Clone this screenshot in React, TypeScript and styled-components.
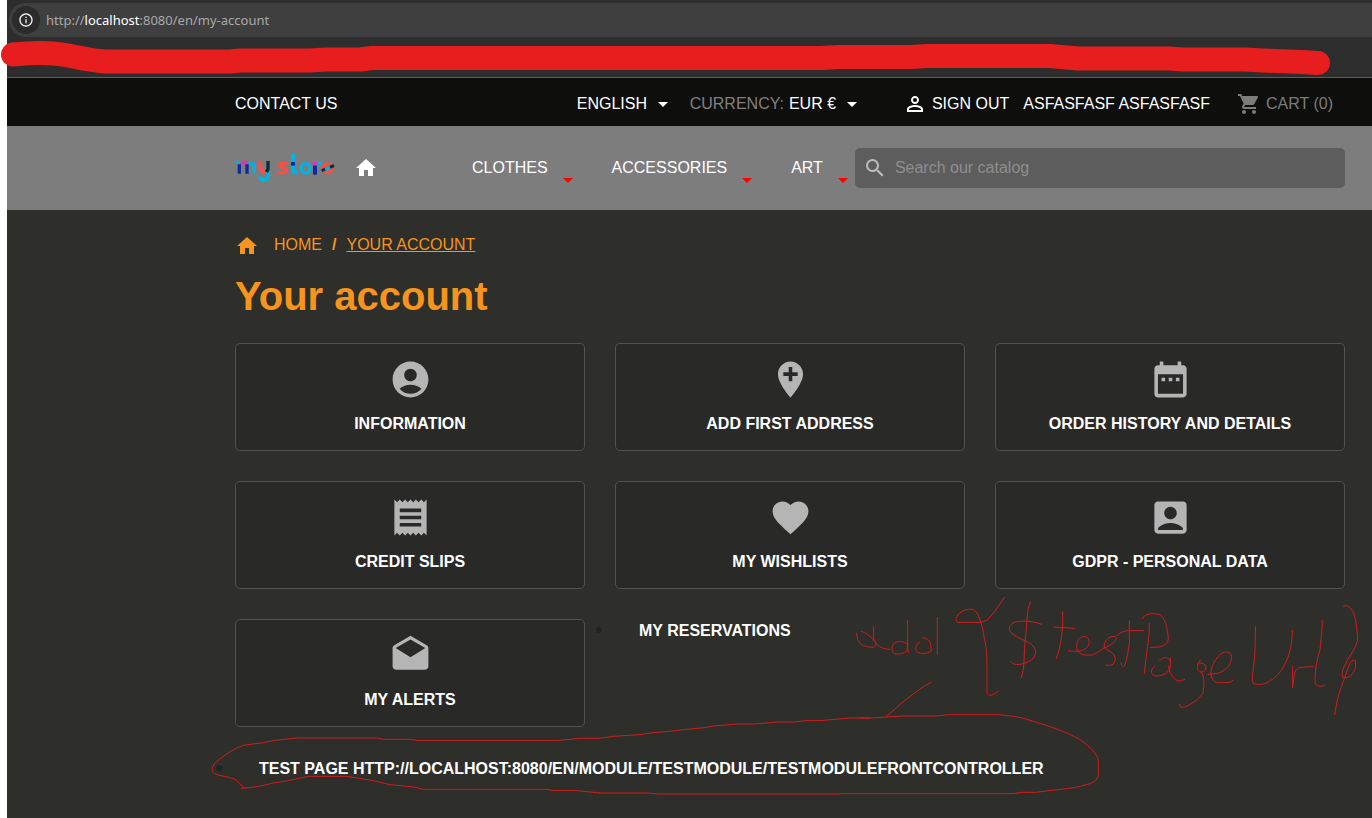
import React from 'react';
import styled, { createGlobalStyle } from 'styled-components';
import {
  MdAccountBox,
  MdAccountCircle,
  MdAddLocation,
  MdArrowDropDown,
  MdDateRange,
  MdDrafts,
  MdFavorite,
  MdHome,
  MdInfoOutline,
  MdPersonOutline,
  MdReceipt,
  MdSearch,
  MdShoppingCart,
} from 'react-icons/md';

const GlobalStyle = createGlobalStyle`
  *, *::before, *::after { box-sizing: border-box; }
  body {
    margin: 0;
    background: #fff;
    font-family: "Liberation Sans", Arial, sans-serif;
    font-size: 16px;
    line-height: 24px;
  }
  a { color: inherit; text-decoration: none; }
  svg { display: block; flex: none; }
`;

const Window = styled.div`
  position: relative;
  min-height: 100vh;
  margin-left: 7px;
  background: #2e2e2a;
  color: #fff;
`;

const BrowserBar = styled.div`
  height: 78px;
  padding: 3px 0 0 2px;
  background: #2d2d2d;
  border-bottom: 1px solid #5c5c5c;
`;

const Address = styled.div`
  display: flex;
  align-items: center;
  gap: 6px;
  height: 34px;
  padding-left: 3px;
  border-radius: 17px 0 0 17px;
  background: #3f3f3f;
`;

const SiteInfo = styled.button`
  display: grid;
  place-items: center;
  width: 28px;
  height: 28px;
  padding: 0;
  border: 0;
  border-radius: 50%;
  background: #2b2b2b;
  color: #f1f1f1;
`;

const Url = styled.div`
  color: #a9a9a9;
  font: 13px/20px "Noto Sans", "Open Sans", sans-serif;

  b { color: #fff; font-weight: 400; }
`;

const gutter = 'padding-left: 228px; padding-right: 27px;';

const TopNav = styled.nav`
  ${gutter}
  display: flex;
  align-items: center;
  height: 48px;
  padding-top: 3px;
  background: #0e0e0c;
  white-space: nowrap;
`;

const TopGroup = styled.div`
  display: flex;
  align-items: center;
  margin-left: auto;
  padding-right: 12px;
`;

const Picker = styled.label<{ $after: number }>`
  display: flex;
  align-items: center;
  gap: 3px;
  margin-right: ${(p) => p.$after}px;
  color: #808080;
`;

const PickerCaption = styled.span`
  margin-right: 2px;
`;

const PickerSelect = styled.select`
  appearance: none;
  padding: 0;
  border: 0;
  background: transparent;
  color: #fff;
  font: inherit;
`;

const TopLink = styled.a<{ $after?: number; $muted?: boolean }>`
  display: flex;
  align-items: center;
  gap: 5px;
  margin-right: ${(p) => p.$after ?? 0}px;
  color: ${(p) => (p.$muted ? '#7c7c7c' : '#fff')};
`;

const Header = styled.header`
  ${gutter}
  display: flex;
  align-items: center;
  height: 84px;
  background: #7d7d7d;
`;

const LogoLink = styled.a`
  margin-right: 19px;
`;

const Menu = styled.ul`
  display: flex;
  gap: 39px;
  margin: 0 7px 0 94px;
  padding: 0;
  list-style: none;
`;

const MenuItem = styled.li`
  display: flex;
  gap: 15px;
`;

const MenuCaret = styled.svg`
  align-self: flex-end;
  margin-bottom: -3px;
`;

const Search = styled.form`
  display: flex;
  flex: 1;
  align-items: center;
  gap: 8px;
  height: 40px;
  padding: 0 8px;
  border-radius: 5px;
  background: #5d5d5d;
  color: #bdbdbd;
`;

const SearchInput = styled.input`
  flex: 1;
  min-width: 0;
  padding: 0;
  border: 0;
  outline: 0;
  background: transparent;
  color: #fff;
  font: inherit;

  &::placeholder { color: #8e8e8e; }
`;

const Main = styled.main`
  ${gutter}
  padding-top: 23px;
`;

const Crumbs = styled.nav`
  display: flex;
  align-items: center;
  gap: 10px;
  height: 24px;
  color: #f7941d;

  svg { margin: 2px 5px 0 0; }
`;

const CurrentCrumb = styled.a`
  text-decoration: underline;
`;

const Title = styled.h1`
  margin: 15px 0 23px;
  color: #f7941d;
  font-size: 40px;
  line-height: 48px;
`;

const Tiles = styled.ul`
  display: grid;
  grid-template-columns: repeat(3, 1fr);
  gap: 30px;
  margin: 0;
  padding: 0;
  list-style: none;
  font-weight: 700;
`;

const TileLink = styled.a`
  display: flex;
  flex-direction: column;
  align-items: center;
  gap: 11px;
  padding: 14px 16px;
  border: 1px solid #525250;
  border-radius: 5px;
  background: #292928;

  svg { color: #b5b5b5; }
`;

const PlainItem = styled.li<{ $wide?: boolean }>`
  grid-column: ${(p) => (p.$wide ? '1 / -1' : 'auto')};
  padding-left: 24px;
  list-style: disc;
  line-height: 20px;

  &::marker { color: #232323; font-size: 20px; }
`;

const Ink = styled.svg`
  position: absolute;
  top: 0;
  left: -7px;
  pointer-events: none;
`;

const Logo = () => (
  <svg width="100" height="32" viewBox="45 36 300 96" fill="none" strokeWidth="10" role="img" aria-label="my store">
    <path d="M49 67h12M86 69Q103 67 103 84V100" stroke="#00b3e3" />
    <path d="M61 68H81" stroke="#d63aaf" strokeWidth="12" />
    <path d="M58 73V101M81 73V101" stroke="#0a2c9c" />
    <path d="M121 64V82Q121 95 137 95" stroke="#ff4c42" strokeWidth="11" />
    <path d="M144 92V104Q144 120 131 120Q121 120 119 109" stroke="#00b3e3" />
    <path d="M144 63V88L139 96" stroke="#062f3b" />
    <path d="M203 70H187Q179 70 179 76Q179 83 190 83Q200 84 200 90Q200 98 190 98H173" stroke="#ff4c42" strokeWidth="9" />
    <path d="M219 42V90Q219 99 233 97" stroke="#00b3e3" strokeWidth="12" />
    <path d="M219 66V77" stroke="#0a2c9c" strokeWidth="12" />
    <circle cx="257" cy="85" r="14" stroke="#00b3e3" />
    <path d="M288 74Q294 69 306 72" stroke="#00b3e3" />
    <path d="M285 76V104" stroke="#0a2c9c" strokeWidth="12" />
    <path d="M277 71H292" stroke="#d63aaf" />
    <ellipse cx="322" cy="85" rx="17" ry="18" fill="#ff4c42" />
    <path d="M305 92L342 77" stroke="#062f3b" strokeWidth="9" />
    <path d="M315 88L330 82" stroke="#00b3e3" strokeWidth="10" />
  </svg>
);

const Annotations = () => (
  <Ink width="1372" height="818" viewBox="0 0 1372 818" fill="none" stroke="#d11d1d" strokeLinecap="round" strokeLinejoin="round" aria-hidden="true">
    <path
      d="M13 54.5C28 53 48 52 65 55C82 58 88 60 105 61.5H230L240 60.5H310L325 59.5H360L372 58H820L840 57H910L928 56H1050L1078 58.5H1170L1182 59.5H1245L1262 60.5L1302 62L1318 63"
      stroke="#e81e1e"
      strokeWidth="24"
    />
    <g strokeWidth="3">
      <g transform="translate(200 470) scale(.3333)">
        <path d="M1198 805H1140L1070 812H655L630 808H550L530 804H290L225 811L190 818L130 826C100 836 80 852 58 868C35 886 28 906 48 913C68 920 88 920 105 928C115 935 124 946 132 955" />
        <path d="M124 955C160 953 190 947 215 940L265 932L325 919H440L520 932L570 944L640 951L668 958H1040L1060 962H1130L1200 969" />
      </g>
      <g transform="translate(560 600) scale(.3333)">
        <path d="M118 415L160 409L240 404L280 398L340 393L370 389L435 383L460 378L535 372H585L655 366H705L735 362H780L870 354H930" />
        <path d="M118 579H265L292 582H840" />
      </g>
      <g transform="translate(840 590) scale(.3333)">
        <path d="M60 384H90L190 378H290L325 374H475C510 377 540 381 560 388C620 406 680 425 720 449C750 470 770 490 775 510V555C770 573 762 578 735 585C700 597 650 598 590 607H545L520 611H0" />
        <path d="M138 381C180 343 220 308 272 277" />
        <path d="M50 130C49 160 70 172 100 172C112 168 108 160 103 152C92 140 80 128 64 124M101 110V145C107 160 118 178 150 178" />
        <path d="M200 160C180 150 155 154 156 175C156 195 170 194 188 190C203 185 203 172 203 160M203 90V175L205 188" />
        <path d="M248 143C268 144 274 158 273 183C264 193 231 193 228 181C226 168 230 160 240 156M292 82V193" />
        <path d="M494 22C480 37 470 60 455 76C445 88 435 96 420 97H352C342 90 350 70 375 60C405 51 412 66 420 90C430 115 431 140 437 165C442 190 441 230 441 310C449 320 457 316 475 304" />
        <path d="M605 103C580 93 545 91 525 96C506 104 504 118 513 127C535 150 580 154 586 180C590 200 575 212 556 219C535 227 518 225 512 214M571 37C560 60 562 90 557 140C550 190 556 230 544 263" />
        <path d="M668 65C670 120 663 170 649 206M640 111L704 115" />
        <path d="M685 182C720 189 750 178 747 152C743 132 714 137 711 160C705 190 725 198 755 195C775 190 780 179 800 171C825 158 834 145 826 139C805 137 790 156 793 172C802 185 825 183 826 210C822 226 812 228 797 225" />
      </g>
      <g transform="translate(1100 590) scale(.3333)">
        <path d="M88 93V160C84 185 82 205 74 226C70 232 65 229 63 218M52 136C64 124 78 122 90 122H131" />
        <path d="M148 99C149 150 141 170 138 205L133 251M127 86C132 72 150 69 180 73C195 85 202 110 205 145C205 160 190 169 178 171L151 172" />
        <path d="M212 215C205 200 190 198 179 212M163 229C149 240 151 258 170 258C190 257 212 248 211 225V203M206 228C208 250 218 265 232 272C240 275 248 271 254 268" />
        <path d="M301 210C288 225 291 245 303 246C318 246 323 230 311 222C300 217 294 218 292 223M303 246C315 260 313 285 309 308C300 325 280 338 258 350C245 354 240 352 239 343" />
        <path d="M324 253C350 253 370 247 384 230C397 213 398 192 387 187C370 180 348 200 337 228C329 250 334 270 349 278H380C390 278 396 275 400 270" />
        <path d="M467 110C465 150 466 180 463 210C460 245 454 265 460 281C472 284 485 284 494 281C520 271 540 250 551 230C570 195 577 160 577 121" />
        <path d="M578 228V293C581 275 581 255 586 243C593 230 608 232 638 230" />
        <path d="M667 92C667 120 662 155 660 180C650 210 643 250 646 282C653 291 664 290 674 286" />
        <path d="M730 49C742 42 752 50 762 72C770 95 770 120 773 140C773 170 750 195 738 220C730 232 723 252 729 263C745 265 760 258 767 230V212C757 206 747 222 742 240C730 275 718 305 712 330L704 374" />
      </g>
    </g>
  </Ink>
);

const tiles = [
  { label: 'INFORMATION', Icon: MdAccountCircle },
  { label: 'ADD FIRST ADDRESS', Icon: MdAddLocation },
  { label: 'ORDER HISTORY AND DETAILS', Icon: MdDateRange },
  { label: 'CREDIT SLIPS', Icon: MdReceipt },
  { label: 'MY WISHLISTS', Icon: MdFavorite },
  { label: 'GDPR - PERSONAL DATA', Icon: MdAccountBox },
  { label: 'MY ALERTS', Icon: MdDrafts },
];

export default function App() {
  return (
    <Window>
      <GlobalStyle />
      <BrowserBar>
        <Address>
          <SiteInfo aria-label="Site information">
            <MdInfoOutline size={16} />
          </SiteInfo>
          <Url>
            http://<b>localhost</b>:8080/en/my-account
          </Url>
        </Address>
      </BrowserBar>

      <TopNav>
        <a href="#contact">CONTACT US</a>
        <TopGroup>
          <Picker $after={15}>
            <PickerSelect aria-label="Language">
              <option>ENGLISH</option>
            </PickerSelect>
            <MdArrowDropDown size={24} color="#fff" />
          </Picker>
          <Picker $after={39}>
            <PickerCaption>CURRENCY:</PickerCaption>
            <PickerSelect>
              <option>EUR €</option>
            </PickerSelect>
            <MdArrowDropDown size={24} color="#fff" />
          </Picker>
          <TopLink href="#signout" $after={14}>
            <MdPersonOutline size={24} />
            SIGN OUT
          </TopLink>
          <TopLink href="#account" $after={27}>
            ASFASFASF ASFASFASF
          </TopLink>
          <TopLink href="#cart" $muted>
            <MdShoppingCart size={24} />
            CART (0)
          </TopLink>
        </TopGroup>
      </TopNav>

      <Header>
        <LogoLink href="#store">
          <Logo />
        </LogoLink>
        <a href="#home" aria-label="Home">
          <MdHome size={24} />
        </a>
        <Menu>
          {['CLOTHES', 'ACCESSORIES', 'ART'].map((name) => (
            <MenuItem key={name}>
              <a href={`#${name.toLowerCase()}`}>{name}</a>
              <MenuCaret width="10" height="5" viewBox="0 0 10 5">
                <path d="M0 0H10L5 5Z" fill="#f00" />
              </MenuCaret>
            </MenuItem>
          ))}
        </Menu>
        <Search role="search">
          <MdSearch size={24} />
          <SearchInput type="text" aria-label="Search" placeholder="Search our catalog" />
        </Search>
      </Header>

      <Main>
        <Crumbs aria-label="Breadcrumb">
          <MdHome size={24} />
          <a href="#home">HOME</a>
          <b>/</b>
          <CurrentCrumb href="#your-account">YOUR ACCOUNT</CurrentCrumb>
        </Crumbs>
        <Title>Your account</Title>
        <Tiles>
          {tiles.map(({ label, Icon }) => (
            <li key={label}>
              <TileLink href="#tile">
                <Icon size={43} />
                {label}
              </TileLink>
            </li>
          ))}
          <PlainItem>
            <a href="#reservations">MY RESERVATIONS</a>
          </PlainItem>
          <PlainItem $wide>
            <a href="#test">TEST PAGE HTTP://LOCALHOST:8080/EN/MODULE/TESTMODULE/TESTMODULEFRONTCONTROLLER</a>
          </PlainItem>
        </Tiles>
      </Main>
      <Annotations />
    </Window>
  );
}
